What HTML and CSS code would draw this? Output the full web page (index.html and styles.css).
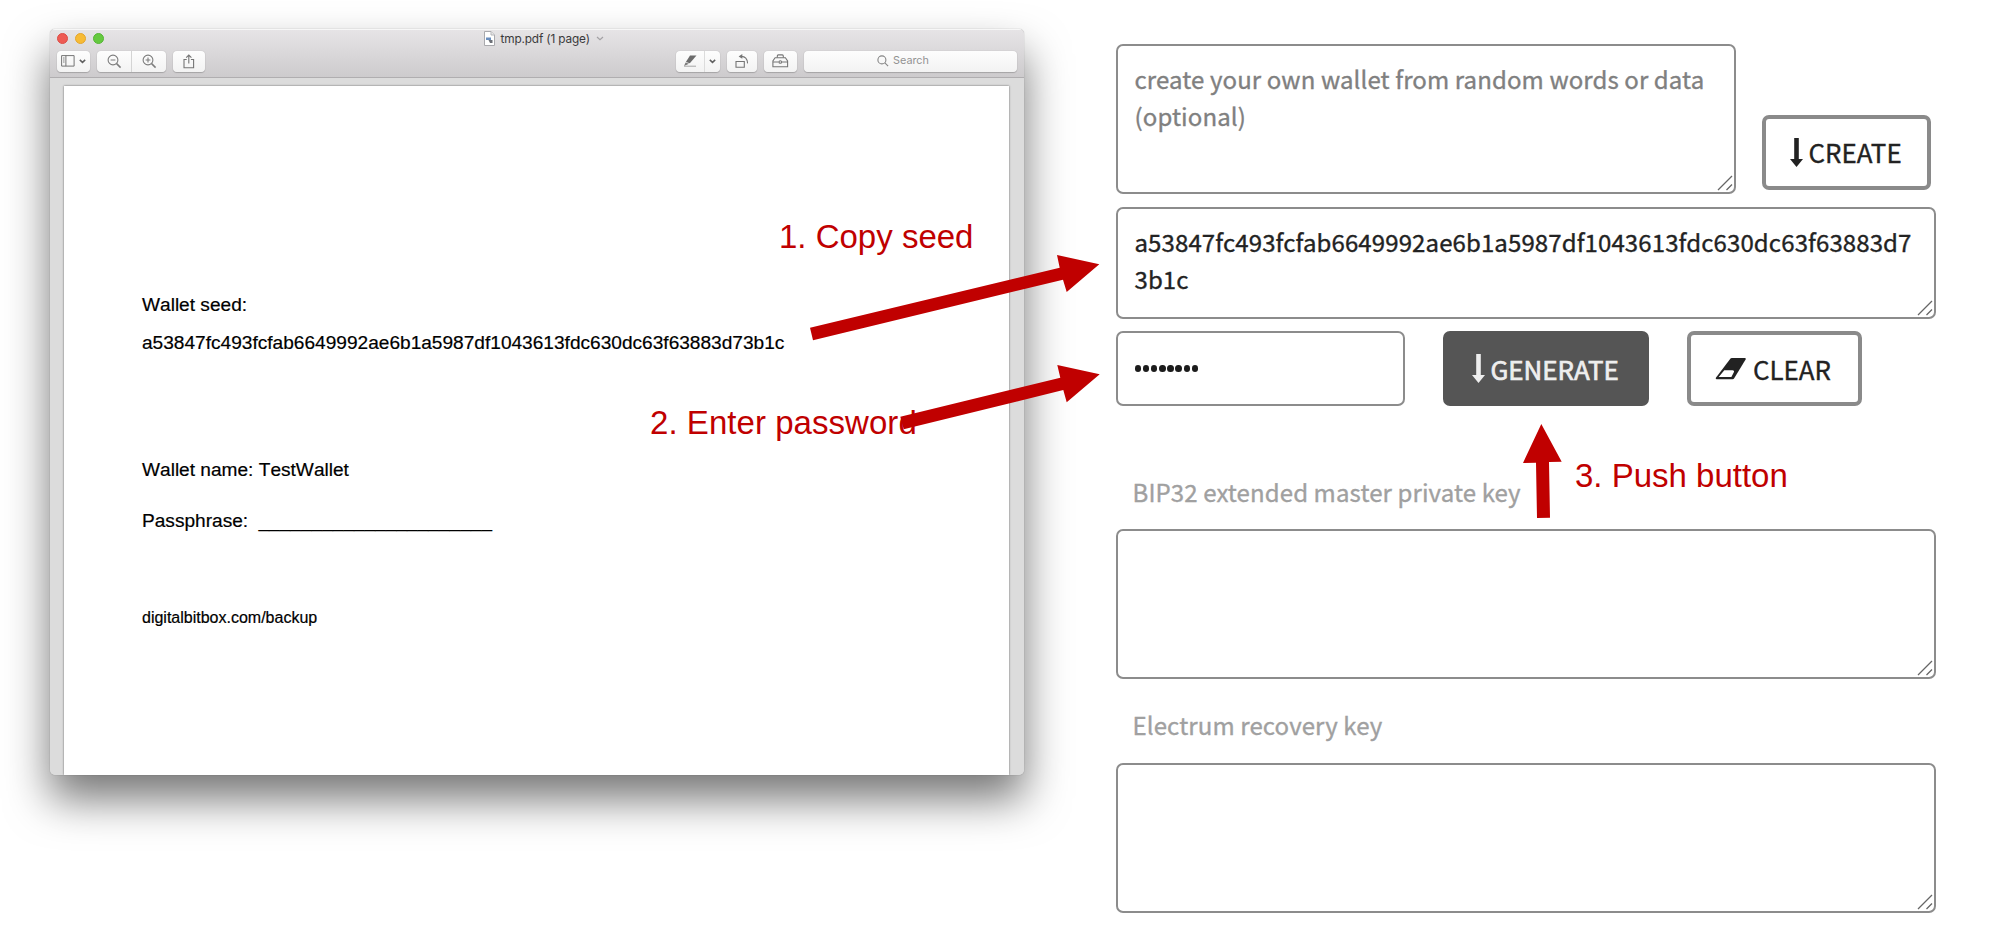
FILE: index.html
```html
<!DOCTYPE html>
<html lang="en">
<head>
<meta charset="utf-8">
<title>Wallet backup</title>
<link rel="stylesheet" href="styles.css">
</head>
<body>
<main class="stage">
  <section class="window">
    <header class="titlebar">
      <div class="title-row">
        <div class="lights"><i class="light red"></i><i class="light amber"></i><i class="light green"></i></div>
        <div class="title">
          <svg width="11" height="15" viewBox="0 0 11 15"><path d="M.5.5h6.500l3.500 3.500v10.500h-10z" fill="#fff" stroke="#a9a9ad"/><path d="M7 .5v3.500h3.500" fill="#e8e8e8" stroke="#b5b5b8"/><path d="M2 6.500h5v2.500h-5z" fill="#6a8fc0"/><path d="M4.500 9h4v3h-2.500z" fill="#6d7077"/></svg>
          <span class="title-text">tmp.pdf (1 page)</span>
          <svg width="8" height="5" viewBox="0 0 8 5"><path d="M1 1l3 2.700L7 1" fill="none" stroke="#a3a1a4" stroke-width="1.200"/></svg>
        </div>
      </div>
      <div class="tools">
        <div class="tool w-side">
          <svg width="14" height="12" viewBox="0 0 14 12" fill="none" stroke="#757575"><path d="M.6.6h12.500v10.500H.6zM4.900.6v10.500"/><path d="M2 3h1.600M2 5h1.600M2 7h1.600" stroke-width=".9"/></svg>
          <svg width="7" height="5" viewBox="0 0 7 5"><path d="M.8.9l2.700 2.500L6.200.9" fill="none" stroke="#5f5f5f" stroke-width="1.500"/></svg>
        </div>
        <div class="tool pair gap-a">
          <span><svg width="15" height="15" viewBox="0 0 15 15" fill="none" stroke="#7d7d7d" stroke-width="1.100"><circle cx="6" cy="6" r="4.900"/><path d="M3.600 6h4.800"/><path d="M9.600 9.600l4 4" stroke-width="1.500"/></svg></span>
          <span><svg width="15" height="15" viewBox="0 0 15 15" fill="none" stroke="#7d7d7d" stroke-width="1.100"><circle cx="6" cy="6" r="4.900"/><path d="M3.600 6h4.800M6 3.600v4.800"/><path d="M9.600 9.600l4 4" stroke-width="1.500"/></svg></span>
        </div>
        <div class="tool w-share gap-a">
          <svg width="12" height="15" viewBox="0 0 12 15" fill="none" stroke="#757575" stroke-width="1.100"><path d="M3.700 5.500H1v8.300h9.600V5.500H7.900"/><path d="M5.800 9.500V1.300M3.200 3.700l2.600-2.600 2.600 2.600"/></svg>
        </div>
        <div class="spacer"></div>
        <div class="tool mark">
          <span><svg width="14" height="12" viewBox="0 0 14 12"><path d="M7 .6h6.500L6.800 8.300 2.900 7z" fill="#6c6c6c"/><path d="M2.600 7.600l3.400 1.200L1 11z" fill="#7a7a7a"/><path d="M1 11.200h12" stroke="#a5a5a5"/></svg></span>
          <span><svg width="7" height="5" viewBox="0 0 7 5"><path d="M.8.9l2.700 2.500L6.200.9" fill="none" stroke="#5f5f5f" stroke-width="1.500"/></svg></span>
        </div>
        <div class="tool w-rotate gap-a">
          <svg width="14" height="15" viewBox="0 0 14 15" fill="none" stroke="#757575" stroke-width="1.100"><path d="M1 7.500h8.300v5.800H1z"/><path d="M6.300 2.400c4 0 6 2.400 6.300 7"/><path d="M7.300 0v4.800L3.600 2.400z" fill="#757575" stroke="none"/></svg>
        </div>
        <div class="tool w-box gap-a">
          <svg width="17" height="14" viewBox="0 0 17 14" fill="none" stroke="#757575" stroke-width="1.100"><path d="M.9 12.700V6.900l2.200-3.100h10.300l2.200 3.100v5.800zM1 8h5.700M9.900 8h5.700"/><path d="M5.300 3.600V1.900q0-1 1-1h4q1 0 1 1v1.700"/><circle cx="8.300" cy="8" r="1.300"/></svg>
        </div>
        <div class="tool search gap-a">
          <svg width="12" height="12" viewBox="0 0 12 12" fill="none" stroke="#858585" stroke-width="1.100"><circle cx="4.900" cy="4.900" r="4"/><path d="M7.900 7.900l3.200 3.200"/></svg>
          <span>Search</span>
        </div>
      </div>
    </header>
    <div class="viewer">
      <article class="page">
        <p class="line seed-label">Wallet seed:</p>
        <p class="line seed-value">a53847fc493fcfab6649992ae6b1a5987df1043613fdc630dc63f63883d73b1c</p>
        <p class="line wallet-name">Wallet name: TestWallet</p>
        <p class="line passphrase">Passphrase: <span class="blank">______________________</span></p>
        <p class="line site">digitalbitbox.com/backup</p>
      </article>
    </div>
  </section>

  <section class="form">
    <div class="row row-create">
      <div class="field entropy"><span class="placeholder">create your own wallet from random words or data<br>(optional)</span>
        <svg class="grip" viewBox="0 0 16 16"><path d="M1 15L15 1M9.500 15L15 9.500"/></svg></div>
      <div class="button create">
        <svg width="13" height="29" viewBox="0 0 13 29"><path d="M4.200 0h4.600v21H13L6.500 29 0 21h4.200z"/></svg><span>CREATE</span>
      </div>
    </div>
    <div class="field seed"><span>a53847fc493fcfab6649992ae6b1a5987df1043613fdc630dc63f63883d7<br>3b1c</span>
      <svg class="grip" viewBox="0 0 16 16"><path d="M1 15L15 1M9.500 15L15 9.500"/></svg></div>
    <div class="row row-actions">
      <div class="field password"><i></i><i></i><i></i><i></i><i></i><i></i><i></i><i></i></div>
      <div class="button generate">
        <svg width="13" height="29" viewBox="0 0 13 29"><path d="M4.200 0h4.600v21H13L6.500 29 0 21h4.200z"/></svg><span>GENERATE</span>
      </div>
      <div class="button clear">
        <svg width="32" height="22" viewBox="0 0 32 22"><path d="M15.500.5q.6-.5 1.200-.5H30q1.300.2.600 1.500L19.200 20.300q-.6.900-1.600.9H1.500q-1.200-.2-.6-1.500z"/><path d="M9.300 12.300h8.200q2.300.3 1.200 2.300l-2.300 4.400H3.700z" fill="#fff"/></svg><span>CLEAR</span>
      </div>
    </div>
    <div class="label label-bip">BIP32 extended master private key</div>
    <div class="field output"><svg class="grip" viewBox="0 0 16 16"><path d="M1 15L15 1M9.500 15L15 9.500"/></svg></div>
    <div class="label label-electrum">Electrum recovery key</div>
    <div class="field output"><svg class="grip" viewBox="0 0 16 16"><path d="M1 15L15 1M9.500 15L15 9.500"/></svg></div>
  </section>

  <div class="note note-copy">1. Copy seed</div>
  <div class="note note-password">2. Enter password</div>
  <div class="note note-push">3. Push button</div>
  <svg class="arrows" width="1995" height="946" viewBox="0 0 1995 946">
    <path d="M810 327.700L1059.700 267.700 1057 255 1099.300 264.300 1066.700 292 1063 279.700 813 340.300z"/>
    <path d="M900.300 416.700L1060.300 377.700 1057.300 365 1099.700 374.300 1066.700 402.300 1063.300 390 903.700 429.300z"/>
    <path d="M1541.300 424L1561.700 461.700 1549 462 1550 517.700 1537 518 1536 462.700 1523 463z"/>
  </svg>
</main>
</body>
</html>
```
FILE: styles.css
```css
* { box-sizing: border-box; }
body { margin: 0; background: #fff; }
p { margin: 0; }
svg { display: block; flex: none; }

.stage {
  position: relative;
  display: flex;
  width: 1995px;
  height: 946px;
  overflow: hidden;
  font-family: "Liberation Sans", Arial, sans-serif;
}

/* Preview window */
.window {
  flex: none;
  display: flex;
  flex-direction: column;
  width: 974px;
  height: 746px;
  margin: 29px 0 0 50px;
  border-radius: 5px;
  background: #dcdcdc;
  overflow: hidden;
  box-shadow: 0 0 1px rgba(0, 0, 0, .45), 0 24px 44px rgba(0, 0, 0, .54);
}
.titlebar {
  flex: none;
  height: 49px;
  padding: 0 7px;
  background: linear-gradient(#e6e4e6, #cdcbcd);
  border-top: 1px solid #f7f7f7;
  border-bottom: 1px solid #b0aeb0;
}
.title-row { display: flex; height: 21px; }
.lights { display: flex; gap: 7px; padding: 3px 0 0; width: 427px; }
.light { width: 11px; height: 11px; border-radius: 50%; }
.red { background: #ee5b54; border: 1px solid #dc4c46; }
.amber { background: #f7bb35; border: 1px solid #e3a52c; }
.green { background: #65c93f; border: 1px solid #55b435; }
.title { display: flex; align-items: center; height: 17px; color: #3a393b; }
.title-text {
  margin: 0 6px 0 5.500px;
  font: 11.800px/16px Inter, "Liberation Sans", sans-serif;
  letter-spacing: -.14px;
  white-space: nowrap;
}
.tools { display: flex; height: 21px; }
.tool {
  display: flex;
  align-items: center;
  justify-content: center;
  height: 20.5px;
  border-radius: 4px;
  background: linear-gradient(#fdfdfd, #f3f3f3);
  box-shadow: 0 0 1px rgba(0, 0, 0, .25), 0 1px 1px rgba(0, 0, 0, .18);
}
.gap-a { margin-left: 7px; }
.w-side { width: 33px; gap: 4px; }
.pair { width: 69px; }
.pair span { flex: 1; display: flex; justify-content: center; }
.pair span + span { border-left: 1px solid #d4d4d4; height: 100%; align-items: center; }
.w-share { width: 32px; }
.spacer { flex: 1; }
.mark { width: 44px; }
.mark span { display: flex; height: 100%; align-items: center; justify-content: center; width: 28px; }
.mark span + span { width: 16px; border-left: 1px solid #dcdcdc; }
.w-rotate { width: 30px; }
.w-box { width: 33px; }
.search {
  width: 213px;
  gap: 4px;
  padding-right: 15px;
  color: #929292;
  font: 10.800px/16px Inter, "Liberation Sans", sans-serif;
}
.viewer { flex: 1; padding: 8px 15px 0 14px; background: #dcdcdc; }
.page {
  height: 100%;
  padding: 207px 0 0 78px;
  background: #fff;
  color: #000;
  box-shadow: 0 0 2px rgba(0, 0, 0, .55);
}
.line {
  height: 24px;
  font-size: 19.1px;
  line-height: 24px;
  font-kerning: none;
  white-space: nowrap;
  -webkit-text-stroke: .2px #000;
}
.seed-value { margin-top: 14px; }
.wallet-name { margin-top: 103px; }
.passphrase { margin-top: 27px; }
.blank { margin-left: 5px; -webkit-text-stroke: 0; }
.site { margin-top: 73px; font-size: 16px; }

/* Wallet form */
.form {
  flex: none;
  width: 820px;
  margin: 43.500px 0 0 92px;
  font: 24px/37.400px "Noto Sans CJK SC", "Open Sans", sans-serif;
  letter-spacing: .11px;
  color: #222;
}
.row { display: flex; }
.row-create { align-items: flex-end; height: 150px; }
.field {
  position: relative;
  border: 2px solid #8c8c8c;
  border-radius: 7px;
  background: #fff;
  padding: 14px 16.500px;
  white-space: nowrap;
}
.field, .label, .button { -webkit-text-stroke: .35px currentColor; }
.entropy { width: 620px; height: 150px; }
.placeholder { color: #808080; }
.seed { height: 112px; margin-top: 13px; }
.grip {
  position: absolute;
  right: 1px;
  bottom: 1px;
  width: 16px;
  height: 16px;
  fill: none;
  stroke: #666;
  stroke-width: 1.300;
}
.button {
  display: flex;
  align-items: center;
  height: 75px;
  border: 4px solid #8a8a8a;
  border-radius: 7px;
  background: #fff;
  font-size: 25.900px;
  letter-spacing: 0;
  white-space: nowrap;
}
.button svg { fill: #222; }
.create { width: 169px; margin: 0 0 4px 26px; padding-left: 24px; gap: 5.500px; }
.row-actions { margin-top: 12.500px; }
.password { display: flex; align-items: center; gap: 1.700px; width: 289px; height: 75px; }
.password i { width: 6.500px; height: 7px; border-radius: 50%; background: #1c1c1c; }
.generate { width: 206px; margin-left: 38px; padding-left: 25px; gap: 5.500px; background: #555; border-color: #555; color: #eee; -webkit-text-stroke: .7px #eee; }
.generate svg { fill: #eee; }
.clear { width: 175px; margin-left: 38px; padding-left: 24px; gap: 6px; }
.label { height: 37.400px; margin-left: 16.500px; color: #a0a0a0; white-space: nowrap; }
.label-bip { margin-top: 67px; }
.output { height: 150px; margin-top: 19px; }
.label-electrum { margin-top: 27px; }

/* Annotations drawn over both panels */
.note {
  position: absolute;
  color: #c00000;
  font-size: 33px;
  line-height: 40px;
  white-space: nowrap;
}
.note-copy { left: 779px; top: 216.500px; }
.note-password { left: 650px; top: 402.500px; letter-spacing: .05px; }
.note-push { left: 1575px; top: 456px; }
.arrows { position: absolute; left: 0; top: 0; fill: #c00000; }
```
